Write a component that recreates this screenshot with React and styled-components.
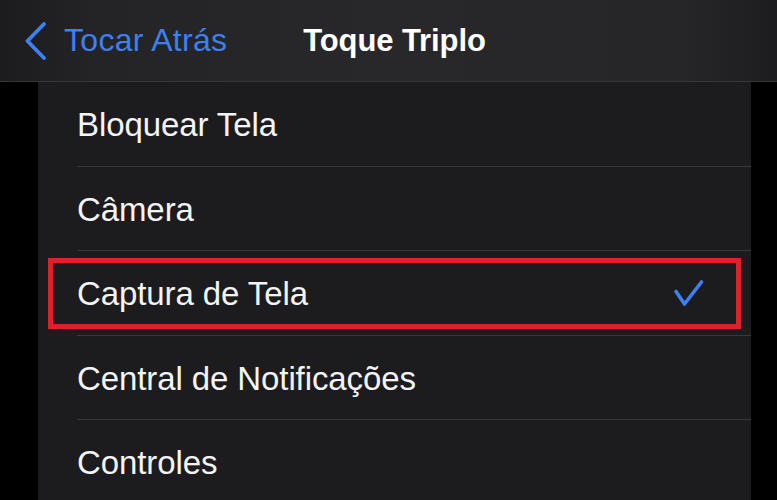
import React from "react";
import styled, { createGlobalStyle } from "styled-components";

const Global = createGlobalStyle`
  html, body { margin: 0; padding: 0; background: #000; }
  body { font-family: "Liberation Sans", Arial, sans-serif; -webkit-font-smoothing: antialiased; }
  #root { width: 777px; height: 500px; overflow: hidden; }
`;

const Screen = styled.div`
  width: 777px;
  height: 500px;
  background: #000;
  display: flex;
  flex-direction: column;
  overflow: hidden;
`;

const NavBar = styled.div`
  flex: 0 0 81px;
  display: grid;
  grid-template-columns: 1fr auto 1fr;
  align-items: center;
  background: linear-gradient(90deg, #1c1c1e 0%, #242426 12%, #28282a 50%, #262628 88%, #1d1d1f 100%);
  border-bottom: 1px solid #37373a;
`;

const BackButton = styled.div`
  display: flex;
  align-items: center;
  gap: 17px;
  padding-left: 25px;
  color: #3c80f2;
  font-size: 32px;
  letter-spacing: 0.3px;
`;

const Title = styled.div`
  color: #fff;
  font-size: 31px;
  font-weight: 700;
  padding-left: 12px;
  letter-spacing: -0.1px;
`;

const Card = styled.div`
  margin: 0 26px 0 38px;
  background: #1c1c1e;
  flex: 1;
  display: flex;
  flex-direction: column;
`;

const Row = styled.div`
  position: relative;
  padding-left: 39px;
  flex: 0 0 auto;
`;

const RowInner = styled.div`
  height: 80.5px;
  padding-top: 3px;
  display: flex;
  align-items: center;
  justify-content: space-between;
  padding-right: 46px;
  border-bottom: 1px solid ${(p) => (p.$last ? "transparent" : "#38383a")};
  color: #f4f4f5;
  font-size: 33px;
  letter-spacing: -0.1px;
`;

const Highlight = styled.div`
  position: absolute;
  top: 7px;
  bottom: 7px;
  left: 10px;
  right: 10px;
  border: 5px solid #de2129;
  pointer-events: none;
`;

const Chevron = () => (
  <svg width="22" height="38" viewBox="0 0 22 38" fill="none">
    <path d="M19 2 L2.5 19 L19 36" stroke="#3c80f2" strokeWidth="3.8" strokeLinecap="round" strokeLinejoin="round" />
  </svg>
);

const Check = () => (
  <svg width="32" height="30" viewBox="0 0 32 30" fill="none">
    <path d="M3 12.5 L11.5 25 L28.5 3" stroke="#3d80f5" strokeWidth="3.6" strokeLinecap="round" strokeLinejoin="round" />
  </svg>
);

const items = [
  "Bloquear Tela",
  "Câmera",
  "Captura de Tela",
  "Central de Notificações",
  "Controles",
];

export default function App() {
  return (
    <>
      <Global />
      <Screen>
        <NavBar>
          <BackButton>
            <Chevron />
            <span>Tocar Atrás</span>
          </BackButton>
          <Title>Toque Triplo</Title>
          <div />
        </NavBar>
        <Card>
          {items.map((label, i) => (
            <Row key={label}>
              <RowInner $last={i === items.length - 1}>
                <span>{label}</span>
                {i === 2 && <Check />}
              </RowInner>
              {i === 2 && <Highlight />}
            </Row>
          ))}
        </Card>
      </Screen>
    </>
  );
}
